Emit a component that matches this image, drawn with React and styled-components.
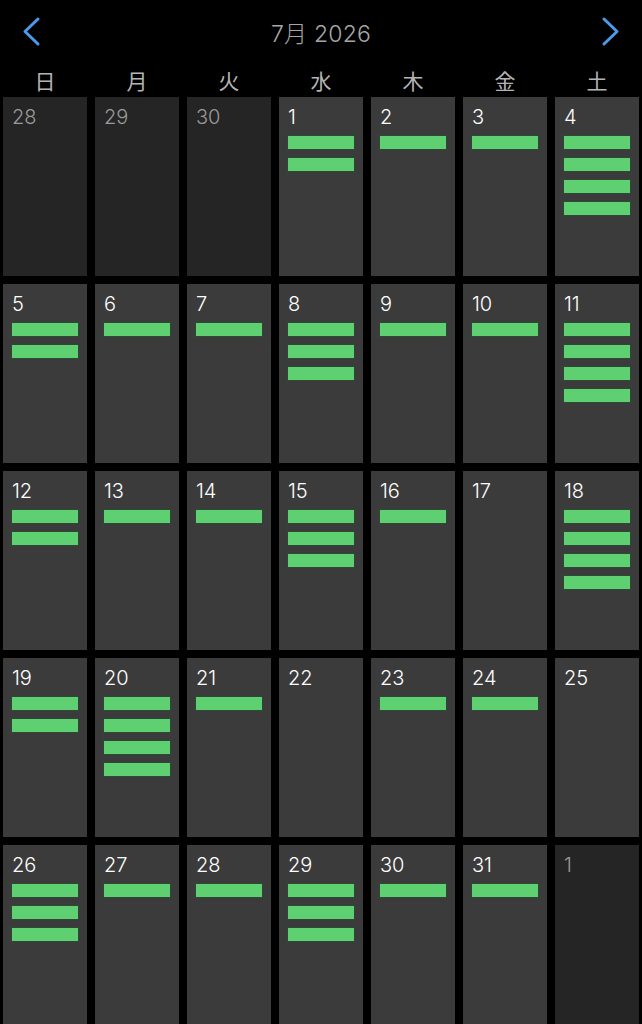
import React from "react";
import styled, {createGlobalStyle} from "styled-components";

// month view: each day cell shows its number and one green bar per entry

const GlobalStyle = createGlobalStyle`
    html, body {
        margin: 0;
        padding: 0;
        background: #000;
    }
    body {
        font-family: Inter, "Noto Sans CJK JP", sans-serif;
    }
`

const WEEKDAYS = ["日", "月", "火", "水", "木", "金", "土"];

// [day, entry count, belongs to shown month]
const WEEKS = [
    [[28, 0, false], [29, 0, false], [30, 0, false], [1, 2, true], [2, 1, true], [3, 1, true], [4, 4, true]],
    [[5, 2, true], [6, 1, true], [7, 1, true], [8, 3, true], [9, 1, true], [10, 1, true], [11, 4, true]],
    [[12, 2, true], [13, 1, true], [14, 1, true], [15, 3, true], [16, 1, true], [17, 0, true], [18, 4, true]],
    [[19, 2, true], [20, 4, true], [21, 1, true], [22, 0, true], [23, 1, true], [24, 1, true], [25, 0, true]],
    [[26, 3, true], [27, 1, true], [28, 1, true], [29, 3, true], [30, 1, true], [31, 1, true], [1, 0, false]],
];

function Chevron({dir}) {
    const points = dir === "left" ? "16,3 3,15.5 16,28" : "3,3 16,15.5 3,28";
    return (
        <svg width="19" height="31" viewBox="0 0 19 31">
            <polyline points={points} fill="none" stroke="#4a9bec" strokeWidth="3"
                      strokeLinecap="round" strokeLinejoin="round" />
        </svg>
    );
}

function App() {
    return (
        <Page>
            <GlobalStyle />
            <Header>
                <NavButton><Chevron dir="left" /></NavButton>
                <Title>7月 2026</Title>
                <NavButton><Chevron dir="right" /></NavButton>
            </Header>
            <Weekdays>
                {WEEKDAYS.map(d => <Weekday key={d}>{d}</Weekday>)}
            </Weekdays>
            <Grid>
                {WEEKS.flat().map(([day, count, inMonth], i) => (
                    <Cell key={i} $inMonth={inMonth}>
                        <DayNum $inMonth={inMonth}>{day}</DayNum>
                        <Bars>
                            {Array.from({length: count}).map((_, j) => <Bar key={j} />)}
                        </Bars>
                    </Cell>
                ))}
            </Grid>
        </Page>
    );
}

const Page = styled.div`
    width: 642px;
    height: 1024px;
    overflow: hidden;
    background: #000;
    padding: 0 3px;
    box-sizing: border-box;
`
const Header = styled.div`
    height: 68px;
    display: flex;
    align-items: center;
    justify-content: space-between;
    padding: 0 19px 0 19px;
`
const NavButton = styled.div`
    width: 19px;
    height: 31px;
    display: flex;
    margin-top: -5px;
`
const Title = styled.div`
    color: #a6a6a6;
    font-size: 23px;
    font-weight: 300;
    letter-spacing: 0.2px;
    margin-top: -5px;
`
const Weekdays = styled.div`
    display: grid;
    grid-template-columns: repeat(7, 84px);
    column-gap: 8px;
    height: 29px;
`
const Weekday = styled.div`
    text-align: center;
    color: #b4b4b4;
    font-family: "Noto Sans CJK JP", sans-serif;
    font-size: 21px;
    line-height: 24px;
`
const Grid = styled.div`
    display: grid;
    grid-template-columns: repeat(7, 84px);
    grid-auto-rows: 179px;
    gap: 8px;
`
const Cell = styled.div`
    background: ${p => p.$inMonth ? "#3b3b3b" : "#252525"};
    padding: 8px 8px 0 8px;
    display: flex;
    flex-direction: column;
`
const DayNum = styled.div`
    color: ${p => p.$inMonth ? "#fff" : "#9a9a9a"};
    font-size: 20px;
    font-weight: 300;
    line-height: 24px;
    padding-left: 1px;
`
const Bars = styled.div`
    display: flex;
    flex-direction: column;
    gap: 7px;
    margin-top: 6px;
`
const Bar = styled.div`
    height: 15px;
    background: #5fd072;
    border: 1px solid #2c4a33;
    box-sizing: border-box;
`

export default App;
